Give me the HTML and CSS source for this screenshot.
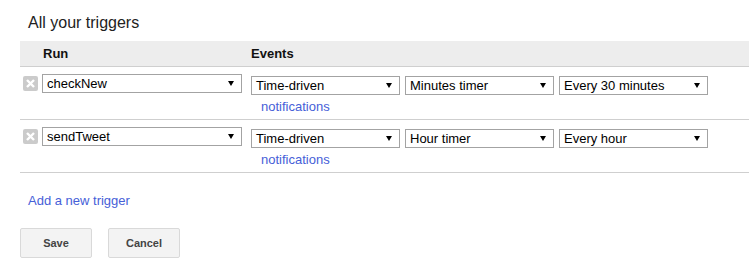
FILE: index.html
```html
<!DOCTYPE html>
<html lang="en">
<head>
    <meta charset="UTF-8">
    <title>All your triggers</title>
    <link rel="stylesheet" href="styles.css">
</head>
<body>
    <h1 class="title">All your triggers</h1>
    <div class="triggers">
        <div class="head">
            <span class="head-run">Run</span>
            <span class="head-events">Events</span>
        </div>
        <div class="row">
            <span class="remove">
                <svg width="15" height="15" viewBox="0 0 15 15"><rect width="15" height="15" rx="2" fill="#cbcbcb"/><path d="M4 4 L11 11 M11 4 L4 11" stroke="#fff" stroke-width="2.4"/></svg>
            </span>
            <div class="select run">checkNew<i class="arrow"></i></div>
            <div class="events">
                <div class="selects">
                    <div class="select">Time-driven<i class="arrow"></i></div>
                    <div class="select">Minutes timer<i class="arrow"></i></div>
                    <div class="select">Every 30 minutes<i class="arrow"></i></div>
                </div>
                <a class="notify" href="#">notifications</a>
            </div>
        </div>
        <div class="row">
            <span class="remove">
                <svg width="15" height="15" viewBox="0 0 15 15"><rect width="15" height="15" rx="2" fill="#cbcbcb"/><path d="M4 4 L11 11 M11 4 L4 11" stroke="#fff" stroke-width="2.4"/></svg>
            </span>
            <div class="select run">sendTweet<i class="arrow"></i></div>
            <div class="events">
                <div class="selects">
                    <div class="select">Time-driven<i class="arrow"></i></div>
                    <div class="select">Hour timer<i class="arrow"></i></div>
                    <div class="select">Every hour<i class="arrow"></i></div>
                </div>
                <a class="notify" href="#">notifications</a>
            </div>
        </div>
    </div>
    <a class="add" href="#">Add a new trigger</a>
    <div class="buttons">
        <button class="btn">Save</button>
        <button class="btn">Cancel</button>
    </div>
</body>
</html>
```

FILE: styles.css
```css
body {
    font-family: 'Liberation Sans', Arial, sans-serif;
    font-size: 13px;
    color: #222;
    margin: 0;
    padding: 0;
    width: 749px;
    overflow: hidden;
}

.title {
    font-size: 16px;
    font-weight: normal;
    color: #222;
    margin: 14px 0 9px 28px;
    line-height: 18px;
}

.triggers {
    margin-left: 20px;
    width: 740px;
}

.head {
    display: flex;
    height: 25px;
    line-height: 25px;
    background-color: #ededed;
    border-bottom: 1px solid #cfcfcf;
    font-weight: bold;
    color: #111;
}

.head-run {
    width: 208px;
    padding-left: 23px;
}

.row {
    display: flex;
    align-items: flex-start;
    height: 45px;
    padding: 7px 0 0 3px;
    border-bottom: 1px solid #cfcfcf;
}

.remove {
    width: 15px;
    height: 15px;
    margin: 2px 4px 0 0;
}

.remove svg {
    display: block;
}

.select {
    position: relative;
    box-sizing: border-box;
    width: 149px;
    height: 19px;
    line-height: 17px;
    border: 1px solid #a3a3a3;
    padding-left: 4px;
    color: #000;
    background-color: #fff;
}

.select.run {
    width: 200px;
}

.arrow {
    position: absolute;
    right: 7px;
    top: 6px;
    width: 0;
    height: 0;
    border-left: 3px solid transparent;
    border-right: 3px solid transparent;
    border-top: 5px solid #000;
}

.events {
    margin-left: 9px;
    padding-top: 2px;
}

.selects {
    display: flex;
    gap: 5px;
}

.notify {
    display: block;
    margin: 4px 0 0 10px;
    line-height: 15px;
    color: #4660d8;
    text-decoration: none;
}

.add {
    display: block;
    margin: 20px 0 0 28px;
    line-height: 15px;
    color: #4660d8;
    text-decoration: none;
}

.buttons {
    display: flex;
    gap: 16px;
    margin: 20px 0 0 20px;
}

.btn {
    width: 72px;
    height: 30px;
    font-family: 'Liberation Sans', Arial, sans-serif;
    font-size: 11px;
    font-weight: bold;
    color: #444;
    background-color: #f3f3f3;
    border: 1px solid #d9d9d9;
    border-radius: 2px;
    padding: 0;
}
```
